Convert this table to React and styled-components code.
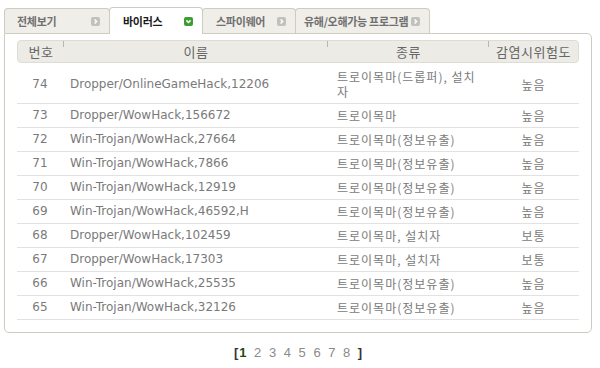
import React from "react";
import styled, { createGlobalStyle } from "styled-components";

const GlobalStyle = createGlobalStyle`
  html, body { margin: 0; padding: 0; background: #fff; }
  body { font-family: "DejaVu Sans", "Noto Sans CJK KR", sans-serif; }
`;

const Wrapper = styled.div`
  width: 600px;
  box-sizing: border-box;
  padding: 7px 8px 0 4px;
`;

const TabBar = styled.div`
  display: flex;
  align-items: flex-end;
  height: 27px;
  margin-bottom: -1px;
  position: relative;
  z-index: 1;
`;

const Tab = styled.div`
  box-sizing: border-box;
  width: ${(p) => p.$w}px;
  height: ${(p) => (p.$active ? 27 : 25)}px;
  margin-bottom: ${(p) => (p.$active ? 0 : 1)}px;
  margin-left: ${(p) => (p.$first ? 0 : -1)}px;
  padding: 0 9px 0 ${(p) => p.$pl}px;
  display: flex;
  align-items: center;
  justify-content: space-between;
  background: ${(p) => (p.$active ? "#fff" : "#efeee8")};
  border: 1px solid #cdcbc2;
  border-bottom: none;
  border-radius: 4px 4px 0 0;
  font-family: "Noto Sans CJK KR", sans-serif;
  font-size: 11px;
  font-weight: 700;
  letter-spacing: -0.3px;
  color: ${(p) => (p.$active ? "#1a1a1a" : "#707070")};
  position: relative;
  z-index: ${(p) => (p.$active ? 2 : 1)};
`;

const TabLabel = styled.span`
  white-space: nowrap;
  line-height: 14px;
  padding-bottom: ${(p) => (p.$active ? 1 : 0)}px;
`;

const Panel = styled.div`
  border: 1px solid #cdcbc2;
  border-radius: 0 5px 5px 5px;
  padding: 6px 12px 12px 12px;
  background: #fff;
`;

const COLS = "46px 264px 161px 1fr";

const HeaderRow = styled.div`
  display: grid;
  grid-template-columns: ${COLS};
  height: 23px;
  box-sizing: border-box;
  background: #ecebe5;
  border: 1px solid #dedcd4;
  border-radius: 4px;
  margin-bottom: 2px;
`;

const HeadCell = styled.div`
  position: relative;
  text-align: center;
  font-family: "Noto Sans CJK KR", sans-serif;
  font-size: 13px;
  line-height: 21px;
  color: #666;
  letter-spacing: 0.5px;
  &::after {
    content: "";
    display: ${(p) => (p.$last ? "none" : "block")};
    position: absolute;
    right: 0;
    top: 0;
    width: 1px;
    height: 6px;
    background: #b9b7ae;
  }
`;

const Row = styled.div`
  display: grid;
  grid-template-columns: ${COLS};
  align-items: center;
  padding: 4px 0;
  border-bottom: 1px solid #e2e2e2;
  font-size: 12px;
  line-height: 15px;
  color: #7a7a7a;
`;

const NumCell = styled.div`
  text-align: center;
`;

const NameCell = styled.div`
  padding-left: 7px;
  white-space: nowrap;
`;

const TypeCell = styled.div`
  padding: 0 9px 0 10px;
  font-family: "Noto Sans CJK KR", sans-serif;
  letter-spacing: 1px;
`;

const RiskCell = styled.div`
  text-align: center;
  font-family: "Noto Sans CJK KR", sans-serif;
  letter-spacing: 1px;
`;

const Pager = styled.div`
  margin-top: 13px;
  text-align: center;
  font-family: "Liberation Sans", sans-serif;
  font-size: 13px;
  line-height: 14px;
  color: #888;
`;

const Bracket = styled.span`
  color: #333;
  font-weight: 700;
`;

const PageNum = styled.span`
  margin: 0 3.8px 0 ${(p) => (p.$current ? 1 : 3.8)}px;
  color: ${(p) => (p.$current ? "#1e4a12" : "#8a8a8a")};
  font-weight: ${(p) => (p.$current ? 700 : 400)};
`;

const ArrowIcon = ({ active }) =>
  active ? (
    <svg width="9" height="9" viewBox="0 0 9 9">
      <rect width="9" height="9" rx="2" fill="#3f9b32" />
      <path d="M2.4 3.4 L4.5 5.5 L6.6 3.4" stroke="#fff" strokeWidth="1.5" fill="none" />
    </svg>
  ) : (
    <svg width="9" height="9" viewBox="0 0 9 9">
      <rect width="9" height="9" rx="2" fill="#c2c1bb" />
      <path d="M3.6 2.4 L5.6 4.5 L3.6 6.6" stroke="#fff" strokeWidth="1.5" fill="none" />
    </svg>
  );

const tabs = [
  { label: "전체보기", w: 106, pl: 12 },
  { label: "바이러스", w: 94, pl: 13, active: true },
  { label: "스파이웨어", w: 94, pl: 13 },
  { label: "유해/오해가능 프로그램", w: 135, pl: 8 },
];

const rows = [
  ["74", "Dropper/OnlineGameHack,12206", "트로이목마(드롭퍼), 설치자", "높음"],
  ["73", "Dropper/WowHack,156672", "트로이목마", "높음"],
  ["72", "Win-Trojan/WowHack,27664", "트로이목마(정보유출)", "높음"],
  ["71", "Win-Trojan/WowHack,7866", "트로이목마(정보유출)", "높음"],
  ["70", "Win-Trojan/WowHack,12919", "트로이목마(정보유출)", "높음"],
  ["69", "Win-Trojan/WowHack,46592,H", "트로이목마(정보유출)", "높음"],
  ["68", "Dropper/WowHack,102459", "트로이목마, 설치자", "보통"],
  ["67", "Dropper/WowHack,17303", "트로이목마, 설치자", "보통"],
  ["66", "Win-Trojan/WowHack,25535", "트로이목마(정보유출)", "높음"],
  ["65", "Win-Trojan/WowHack,32126", "트로이목마(정보유출)", "높음"],
];

export default function App() {
  return (
    <>
      <GlobalStyle />
      <Wrapper>
        <TabBar>
          {tabs.map((t, i) => (
            <Tab key={t.label} $w={t.w} $pl={t.pl} $active={t.active} $first={i === 0}>
              <TabLabel $active={t.active}>{t.label}</TabLabel>
              <ArrowIcon active={t.active} />
            </Tab>
          ))}
        </TabBar>
        <Panel>
          <HeaderRow>
            <HeadCell>번호</HeadCell>
            <HeadCell>이름</HeadCell>
            <HeadCell>종류</HeadCell>
            <HeadCell $last>감염시위험도</HeadCell>
          </HeaderRow>
          {rows.map((r) => (
            <Row key={r[0]}>
              <NumCell>{r[0]}</NumCell>
              <NameCell>{r[1]}</NameCell>
              <TypeCell>{r[2]}</TypeCell>
              <RiskCell>{r[3]}</RiskCell>
            </Row>
          ))}
        </Panel>
        <Pager>
          <Bracket>[</Bracket>
          {[1, 2, 3, 4, 5, 6, 7, 8].map((n) => (
            <PageNum key={n} $current={n === 1}>
              {n}
            </PageNum>
          ))}
          <Bracket> ]</Bracket>
        </Pager>
      </Wrapper>
    </>
  );
}
